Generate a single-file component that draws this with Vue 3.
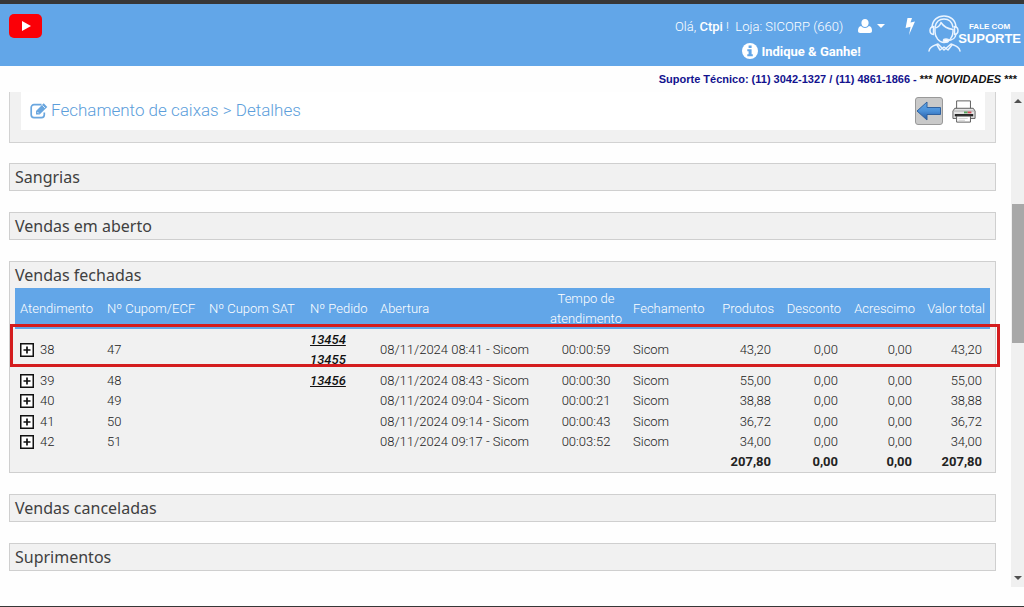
<script setup>
const columns = [
  { key: 'id', label: 'Atendimento' },
  { key: 'ecf', label: 'Nº Cupom/ECF' },
  { key: 'sat', label: 'Nº Cupom SAT' },
  { key: 'order', label: 'Nº Pedido' },
  { key: 'opened', label: 'Abertura' },
  { key: 'time', label: 'Tempo de atendimento' },
  { key: 'closed', label: 'Fechamento' },
  { key: 'products', label: 'Produtos' },
  { key: 'discount', label: 'Desconto' },
  { key: 'extra', label: 'Acrescimo' },
  { key: 'total', label: 'Valor total' },
]

const sales = [
  { id: 38, ecf: 47, orders: ['13454', '13455'], opened: '08/11/2024 08:41 - Sicom', time: '00:00:59', value: '43,20' },
  { id: 39, ecf: 48, orders: ['13456'], opened: '08/11/2024 08:43 - Sicom', time: '00:00:30', value: '55,00' },
  { id: 40, ecf: 49, orders: [], opened: '08/11/2024 09:04 - Sicom', time: '00:00:21', value: '38,88' },
  { id: 41, ecf: 50, orders: [], opened: '08/11/2024 09:14 - Sicom', time: '00:00:43', value: '36,72' },
  { id: 42, ecf: 51, orders: [], opened: '08/11/2024 09:17 - Sicom', time: '00:03:52', value: '34,00' },
]
</script>

<template>
  <div class="page">
    <header class="topbar">
      <a class="youtube" href="#" aria-label="YouTube">
        <svg width="33" height="24" viewBox="0 0 33 24">
          <rect width="33" height="24" rx="5" fill="#fb0007" />
          <path d="M13 7v10l9-5z" fill="#fff" />
        </svg>
      </a>
      <div class="topbar-right">
        <div class="account">
          <div class="account-row">
            <span class="greeting">Olá, <b>Ctpi</b> !&nbsp; Loja: SICORP (660)</span>
            <button class="user-menu" type="button" aria-label="Usuário">
              <svg width="14" height="14" viewBox="0 0 14 14" fill="#fff">
                <path d="M7 0c2.100 0 3.600 1.600 3.600 3.900S9.100 8 7 8 3.400 6.200 3.400 3.900 4.900 0 7 0z" />
                <path d="M3 7C4.200 8.300 5.500 9 7 9s2.800-.7 4-2C13 7.400 14 9.300 14 11.800c0 1.400-.8 2.200-2.200 2.200H2.200C.8 14 0 13.200 0 11.800 0 9.300 1 7.400 3 7z" />
              </svg>
              <svg width="8" height="4" viewBox="0 0 8 4"><path d="M0 0h8L4 4z" fill="#fff" /></svg>
            </button>
            <button class="bolt" type="button" aria-label="Ações rápidas">
              <svg width="10" height="17" viewBox="0 0 10 17">
                <path d="M2.500 0h4.500L5.500 4.600 10 3.500 4 17l1.600-8.300L.6 9.900z" fill="#fff" />
              </svg>
            </button>
          </div>
          <a class="refer" href="#">
            <svg width="16" height="16" viewBox="0 0 16 16">
              <circle cx="8" cy="8" r="8" fill="#fff" />
              <path d="M6.600 2.500h3v2.500h-3zM5.300 6.300h4.300v5h1.200v1.900H5.300v-1.900h1.300V8.200H5.300z" fill="#62a6e8" />
            </svg>
            Indique &amp; Ganhe!
          </a>
        </div>
        <a class="support" href="#">
          <svg width="33" height="37" viewBox="0 0 33 37" fill="none" stroke="#e9f4ff" stroke-width="1.500" stroke-linecap="round" stroke-linejoin="round">
            <path d="M4 12C4.500 5 9.500 1 16 1s11.500 4 12 11" />
            <path d="M7 12C8 7 11 4 16 4s8 3 9 8" />
            <path d="M5.500 11.500C3 12 2 13.500 2 15.500s1.300 3.800 3.500 4zM26.500 11.500c2.500.5 3.500 2 3.500 4s-1.300 3.800-3.500 4z" />
            <path d="M7 13v4c0 5 4 10.500 9 10.500S25 22 25 17v-2.500c-5-.7-9.500-3-12-7C12 10.500 10 12.500 7 13z" />
            <path d="M28 19c-.5 4-4 6.500-9 6.500" />
            <ellipse cx="18" cy="25.500" rx="2.500" ry="1.600" fill="#fff" />
            <path d="M1 36c.4-4 4-5 9-7l6 6 7-6c5 2 8.500 3 9 7M9 30l3 5 4-3 4 3 4-5" />
          </svg>
          <span class="support-text"><small>FALE COM</small><strong>SUPORTE</strong></span>
        </a>
      </div>
    </header>

    <div class="notice">
      <span>Suporte Técnico: (11) 3042-1327 / (11) 4861-1866 - </span><a href="#">*** <i>NOVIDADES</i> ***</a>
    </div>

    <div class="viewport">
      <main class="content">
        <section class="crumb-panel">
          <div class="crumb">
            <svg width="18" height="16" viewBox="0 0 18 16" fill="none">
              <path d="M11.500 1.700H4A2.800 2.800 0 0 0 1.200 4.500v7.300A2.800 2.800 0 0 0 4 14.600h7.500a2.800 2.800 0 0 0 2.800-2.800V9.500" stroke="#69a6df" stroke-width="1.700" />
              <path d="M6 8 13.700.3l3.600 3.600-7.700 7.700H6z" fill="#69a6df" />
              <path d="m7.300 8.900 1.400 1.400M12.500 2.500l2.600 2.600" stroke="#fff" stroke-width=".8" />
            </svg>
            <h1>Fechamento de caixas &gt; Detalhes</h1>
            <button class="back" type="button" aria-label="Voltar">
              <svg width="26" height="22" viewBox="0 0 26 22">
                <defs>
                  <linearGradient id="arrow" x1="0" y1="0" x2="0" y2="1">
                    <stop offset="0" stop-color="#62a6e8" /><stop offset=".5" stop-color="#4c91d8" /><stop offset="1" stop-color="#2459a4" />
                  </linearGradient>
                </defs>
                <path d="M1 11 11 2v5.500h13.500v7H11V20z" fill="url(#arrow)" stroke="#31629f" />
              </svg>
            </button>
            <button class="print" type="button" aria-label="Imprimir">
              <svg width="24" height="25" viewBox="0 0 26 26">
                <path d="M5 10V1.500h15V10" fill="#fff" stroke="#555" />
                <path d="M3 9.500h20l2 3v8H1v-8z" fill="#e4e4e4" stroke="#555" />
                <path d="M1.500 12.500h23" stroke="#aaa" />
                <path d="M13 14h4" stroke="#55a35c" stroke-width="2" /><path d="M17 14h4" stroke="#d34b58" stroke-width="2" />
                <path d="M3 17h20" stroke="#222" stroke-width="2.500" />
                <path d="M5 18h15v6.500H5z" fill="#fff" stroke="#555" />
                <path d="M7 20.500h10M7 22.500h7" stroke="#ccc" />
              </svg>
            </button>
          </div>
        </section>

        <section class="panel"><h2>Sangrias</h2></section>
        <section class="panel"><h2>Vendas em aberto</h2></section>

        <section class="panel">
          <h2>Vendas fechadas</h2>
          <div class="table-wrap">
            <table>
              <colgroup><col v-for="c in columns" :key="c.key" :class="'w-' + c.key" /></colgroup>
              <thead>
                <tr><th v-for="c in columns" :key="c.key" :class="c.key" scope="col">{{ c.label }}</th></tr>
              </thead>
              <tbody>
                <tr v-for="s in sales" :key="s.id">
                  <td>
                    <span class="id-cell">
                      <button class="expand" type="button" :aria-label="'Expandir ' + s.id">
                        <svg width="14" height="14" viewBox="0 0 14 14" fill="#fff" stroke="#111">
                          <rect x=".75" y=".75" width="12.500" height="12.500" stroke-width="1.500" />
                          <path d="M3.500 7h7M7 3.500v7" stroke-width="1.700" />
                        </svg>
                      </button>
                      {{ s.id }}
                    </span>
                  </td>
                  <td>{{ s.ecf }}</td>
                  <td></td>
                  <td><a v-for="o in s.orders" :key="o" class="order-link" href="#">{{ o }}</a></td>
                  <td>{{ s.opened }}</td>
                  <td class="time">{{ s.time }}</td>
                  <td>Sicom</td>
                  <td class="num">{{ s.value }}</td>
                  <td class="num">0,00</td>
                  <td class="num">0,00</td>
                  <td class="num">{{ s.value }}</td>
                </tr>
              </tbody>
              <tfoot>
                <tr>
                  <td colspan="7"></td>
                  <td class="num">207,80</td>
                  <td class="num">0,00</td>
                  <td class="num">0,00</td>
                  <td class="num">207,80</td>
                </tr>
              </tfoot>
            </table>
            <div class="highlight"></div>
          </div>
        </section>

        <section class="panel"><h2>Vendas canceladas</h2></section>
        <section class="panel"><h2>Suprimentos</h2></section>
      </main>

      <div class="scrollbar" aria-hidden="true">
        <svg width="8" height="4" viewBox="0 0 8 4"><path d="M0 4h8L4 0z" fill="#505050" /></svg>
        <div class="track"><div class="before"></div><div class="thumb"></div><div class="after"></div></div>
        <svg width="8" height="4" viewBox="0 0 8 4"><path d="M0 0h8L4 4z" fill="#505050" /></svg>
      </div>
    </div>
    <footer class="bottom"></footer>
  </div>
</template>

<style>
body { background: #fefefe; }
</style>

<style scoped>
.page {
  display: flex;
  flex-direction: column;
  height: 100vh;
  box-sizing: border-box;
  border-top: 4px solid #373737;
  font-family: Roboto, "Liberation Sans", sans-serif;
  font-size: 13px;
  font-weight: 300;
  color: #222;
}
button { padding: 0; border: 0; background: none; display: flex; align-items: center; cursor: pointer; }
a { color: inherit; text-decoration: none; }
svg { display: block; flex: none; }

.topbar {
  display: flex;
  justify-content: space-between;
  align-items: flex-start;
  height: 62px;
  flex: none;
  box-sizing: border-box;
  padding: 10px 3px 0 9px;
  background: #62a6e8;
  color: #fff;
}
.topbar-right { display: flex; }
.account { display: flex; flex-direction: column; align-items: center; }
.account-row { display: flex; align-items: center; height: 24px; padding-right: 13px; }
.greeting b { font-weight: 500; }
.user-menu { gap: 5px; margin-left: 15px; }
.bolt { margin-left: 20px; }
.refer { display: flex; align-items: center; gap: 3px; height: 26px; font-weight: 700; }
.support { display: flex; align-items: center; height: 38px; }
.support-text { display: flex; flex-direction: column; align-items: center; font-family: "Liberation Sans", sans-serif; font-weight: 700; margin-left: -3px; }
.support-text small { font-size: 8px; line-height: 10px; }
.support-text strong { font-size: 13px; line-height: 13px; }

.notice {
  flex: none;
  height: 26px;
  line-height: 26px;
  padding-right: 7px;
  text-align: right;
  white-space: pre;
  font-family: "Liberation Sans", sans-serif;
  font-size: 11px;
  font-weight: 700;
  color: #12128e;
}
.notice a { color: #111; }

.viewport { flex: 1; min-height: 0; display: flex; gap: 15px; padding-left: 9px; }
.content { flex: 1; min-width: 0; overflow: hidden; display: flex; flex-direction: column; gap: 21px; margin-right: -15px; padding-right: 15px; }
.crumb-panel {
  flex: none;
  padding: 0 10px 12px 11px;
  background: #f1f1f1;
  border: 1px solid #d2d2d2;
  border-top: 0;
  margin-bottom: -1px;
}
.crumb { display: flex; align-items: center; height: 38px; padding: 0 8px 0 9px; background: #fff; }
.crumb h1 { flex: 1; margin: 0; padding: 0 0 2px 3px; font-size: 17px; font-weight: 300; line-height: 36px; color: #5c9edb; }
.back { width: 28px; height: 28px; box-sizing: border-box; justify-content: center; border: 1px solid #999; border-radius: 3px; background: #c9c9c9; }
.print { margin: 0 1px 0 9px; }

.panel { flex: none; background: #f1f1f1; border: 1px solid #cfcfcf; padding: 0 5px; }
.panel h2 { margin: 0; font-family: "Noto Sans", "DejaVu Sans Condensed", sans-serif; font-size: 16px; font-weight: 400; line-height: 26px; color: #404040; }

.table-wrap { position: relative; }
table { width: 100%; table-layout: fixed; border-collapse: collapse; }
.w-id { width: 87px; }
.w-ecf { width: 102px; }
.w-sat { width: 101px; }
.w-order { width: 70px; }
.w-opened { width: 169px; }
.w-time { width: 84px; }
.w-closed { width: 88px; }
.w-products { width: 63px; }
.w-discount { width: 67px; }
.w-extra { width: 74px; }
.w-total { width: 70px; }
th, td { padding: 0 5px; text-align: left; vertical-align: middle; line-height: 20px; white-space: nowrap; }
thead tr, tbody tr:first-child { height: 41px; }
thead tr { background: #62a6e8; color: #fff; }
th { font-weight: 300; }
th.time { white-space: normal; }
.time { text-align: center; padding: 0; }
th.products, th.discount, th.extra, th.total { text-align: right; padding-left: 0; }
td.num { text-align: right; padding: 0 8px 0 0; }
tbody tr:nth-child(even) { height: 21px; }
tfoot td { height: 20px; font-weight: 700; }
.id-cell { display: flex; align-items: center; gap: 6px; }
.order-link { display: block; font-weight: 500; font-style: italic; text-decoration: underline; color: #111; }
.highlight {
  position: absolute;
  top: 36px;
  left: -5px;
  right: -10px;
  height: 43px;
  box-sizing: border-box;
  border: 3px solid #d41c1e;
  pointer-events: none;
}

.scrollbar { flex: none; width: 13px; display: flex; flex-direction: column; align-items: center; padding: 7px 0; box-sizing: border-box; background: #f0f0f0; }
.track { flex: 1; align-self: stretch; display: flex; flex-direction: column; padding: 6px 0 6px 1px; }
.before { flex: 95; }
.thumb { flex: 139; background: #a8a8a8; }
.after { flex: 227; }
.bottom { flex: none; height: 19px; border-bottom: 1px solid #373737; }
</style>
